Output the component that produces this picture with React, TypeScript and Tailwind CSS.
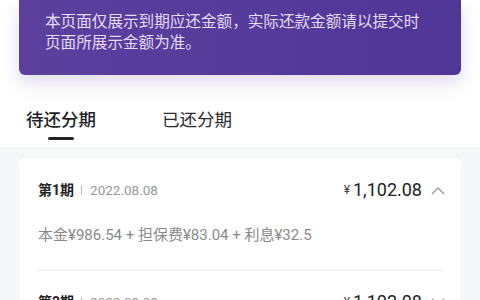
import React from 'react'

const font = { fontFamily: "Roboto, 'Noto Sans CJK SC', sans-serif" }

const Chevron = ({ up }: { up: boolean }) => (
  <svg width="14" height="9" viewBox="0 0 14 9" className="ml-[9px]">
    <path d={up ? 'M1 8 L7 2 L13 8' : 'M1 1 L7 7 L13 1'} fill="none" stroke="#9a9a9a" strokeWidth="1.3" />
  </svg>
)

const periods = [
  { no: 1, date: '2022.08.08', open: true },
  { no: 2, date: '2022.09.08', open: false },
]

export default function App() {
  return (
    <div className="w-[480px] h-[300px] overflow-hidden bg-white flex flex-col" style={font}>
      {/* notice card */}
      <div className="mx-[19px] h-[75px] shrink-0 rounded-b-[6px] bg-gradient-to-r from-[#5b409e] to-[#4f3697] shadow-[0_8px_18px_rgba(90,62,156,0.18)] px-[26px] pt-[12px] text-[15.6px] leading-[21px] text-[#e4dcf5]">
        <p>本页面仅展示到期应还金额，实际还款金额请以提交时</p>
        <p>页面所展示金额为准。</p>
      </div>

      {/* tabs */}
      <div className="h-[72px] shrink-0 flex pl-[26px] pt-[33px] gap-[66px]">
        <div className="flex flex-col items-center">
          <span className="text-[17.5px] leading-[24px] font-medium text-[#1e1e24]">待还分期</span>
          <span className="mt-[5px] w-[26px] h-[3px] rounded-full bg-[#23232b]" />
        </div>
        <span className="text-[17.5px] leading-[24px] text-[#2a2a30]">已还分期</span>
      </div>

      {/* list */}
      <div className="flex-1 bg-[#f6f7f9] px-[19px] pt-[11px]">
        <div className="bg-white rounded-[6px] pl-[19px] pr-[16px] pt-[24px]">
          {periods.map((p, i) => (
            <div key={p.no}>
              {i > 0 && <div className="h-px bg-[#ececec] mr-[3px] mb-[23px]" />}
              <div className="flex items-center h-[16px]">
                <span className="text-[14px] font-bold text-[#222]">第{p.no}期</span>
                <span className="ml-[7px] mr-[8px] w-px h-[10px] bg-[#bbb]" />
                <span className="text-[13.5px] text-[#999]">{p.date}</span>
                <span className="ml-auto flex items-center text-[#222]">
                  <span className="text-[12px] mr-[3px] text-[#444]">¥</span>
                  <span className="text-[18px] leading-[16px]">1,102.08</span>
                  <Chevron up={p.open} />
                </span>
              </div>
              {p.open && (
                <div className="pt-[27px] pb-[25px] text-[15px] leading-[20px] text-[#8a8a8a] whitespace-pre">
                  {'本金¥986.54 + 担保费¥83.04 + 利息¥32.5'}
                </div>
              )}
            </div>
          ))}
        </div>
      </div>
    </div>
  )
}
